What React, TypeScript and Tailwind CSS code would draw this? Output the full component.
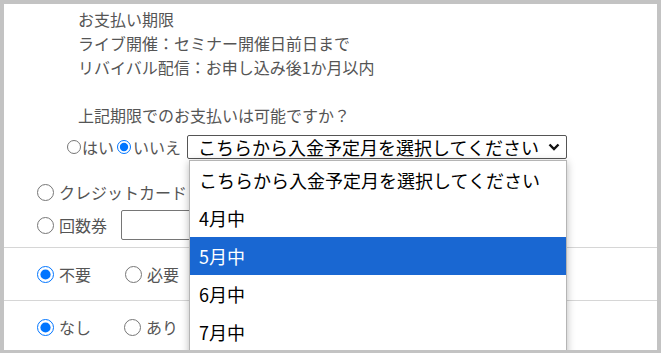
const MONTHS = ["4月中", "5月中", "6月中", "7月中"];

function Radio({ checked, small }: { checked?: boolean; small?: boolean }) {
  return (
    <input
      type="radio"
      readOnly
      checked={!!checked}
      className={`m-0 shrink-0 accent-[#0075ff] ${small ? "w-[14px] h-[14px]" : "w-[17px] h-[17px]"}`}
    />
  );
}

export default function App() {
  return (
    <div
      className="w-[661px] h-[353px] bg-[#c3c3c3] pt-[4px] px-[4px] pb-[3px]"
      style={{ fontFamily: '"Noto Sans CJK JP", "Noto Sans", sans-serif' }}
    >
      <div className="relative w-full h-full bg-white overflow-hidden text-[#555] text-[16px]">
        <div className="pt-[3px] pl-[74px] leading-[24px]">
          <p>お支払い期限</p>
          <p>ライブ開催：セミナー開催日前日まで</p>
          <p>リバイバル配信：お申し込み後1か月以内</p>
          <div className="h-[24px]" />
          <p>上記期限でのお支払いは可能ですか？</p>
        </div>

        <div className="mt-[8px] h-[24px] flex items-center pl-[63px]">
          <Radio small />
          <span className="ml-[1px]">はい</span>
          <span className="ml-[3px] flex">
            <Radio small checked />
          </span>
          <span className="ml-[2px]">いいえ</span>
          <div className="ml-[6px] w-[380px] h-[24px] border border-[#555] rounded-[2px] flex items-center justify-between pl-[10px] pr-[5px] text-[18px] text-black">
            <span className="leading-none">こちらから入金予定月を選択してください</span>
            <svg width="12" height="8" viewBox="0 0 12 8" className="mr-[1px]">
              <path d="M1.5 1.5 L6 6 L10.5 1.5" fill="none" stroke="#111" strokeWidth="2.4" />
            </svg>
          </div>
        </div>

        <div className="mt-[17px] h-[32px] flex items-center pl-[33px]">
          <Radio />
          <span className="ml-[5px]">クレジットカード</span>
        </div>
        <div className="h-[34px] flex items-center pl-[33px]">
          <Radio />
          <span className="ml-[5px]">回数券</span>
          <div className="ml-[14px] w-[220px] h-[30px] border border-[#767676] rounded-[2px]" />
        </div>

        <div className="mt-[5px] border-t border-[#d6d6d6] h-[53px] flex items-center pl-[33px]">
          <Radio checked />
          <span className="ml-[5px]">不要</span>
          <span className="ml-[34px] flex">
            <Radio />
          </span>
          <span className="ml-[5px]">必要</span>
        </div>
        <div className="border-t border-[#d6d6d6] h-[53px] flex items-center pl-[33px]">
          <Radio checked />
          <span className="ml-[5px]">なし</span>
          <span className="ml-[33px] flex">
            <Radio />
          </span>
          <span className="ml-[5px]">あり</span>
        </div>

        <div className="absolute left-[185px] top-[156px] w-[378px] h-[220px] bg-white border border-[#b5b5b5] shadow-[0_2px_8px_rgba(0,0,0,0.28)] text-[18px] text-black">
          <div className="h-[38px] flex items-center pl-[9px]">こちらから入金予定月を選択してください</div>
          {MONTHS.map((m) => (
            <div
              key={m}
              className={`h-[38px] flex items-center pl-[9px] ${m === "5月中" ? "bg-[#1967d2] text-white" : ""}`}
            >
              {m}
            </div>
          ))}
        </div>
      </div>
    </div>
  );
}
